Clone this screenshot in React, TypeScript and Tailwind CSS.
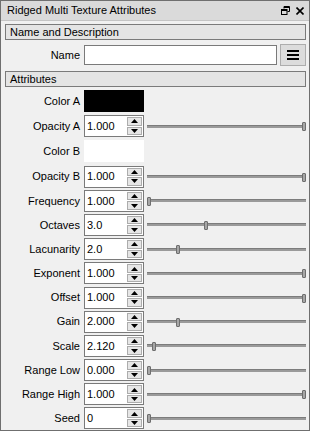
import React from 'react';

type Row =
  | { kind: 'color'; label: string; color: string }
  | { kind: 'spin'; label: string; value: string; pos: number };

const rows: Row[] = [
  { kind: 'color', label: 'Color A', color: '#000000' },
  { kind: 'spin', label: 'Opacity A', value: '1.000', pos: 1 },
  { kind: 'color', label: 'Color B', color: '#ffffff' },
  { kind: 'spin', label: 'Opacity B', value: '1.000', pos: 1 },
  { kind: 'spin', label: 'Frequency', value: '1.000', pos: 0 },
  { kind: 'spin', label: 'Octaves', value: '3.0', pos: 0.365 },
  { kind: 'spin', label: 'Lacunarity', value: '2.0', pos: 0.19 },
  { kind: 'spin', label: 'Exponent', value: '1.000', pos: 1 },
  { kind: 'spin', label: 'Offset', value: '1.000', pos: 1 },
  { kind: 'spin', label: 'Gain', value: '2.000', pos: 0.19 },
  { kind: 'spin', label: 'Scale', value: '2.120', pos: 0.03 },
  { kind: 'spin', label: 'Range Low', value: '0.000', pos: 0 },
  { kind: 'spin', label: 'Range High', value: '1.000', pos: 1 },
  { kind: 'spin', label: 'Seed', value: '0', pos: 0 },
];

function SectionHeader({ title }: { title: string }) {
  return (
    <div className="h-[16px] border border-[#7a7a7a] bg-[#e4e4e4] pl-[4px] flex items-center leading-none">
      {title}
    </div>
  );
}

function SpinBox({ value }: { value: string }) {
  return (
    <div className="w-[60px] h-[22px] border border-[#7a7a7a] bg-white flex items-center">
      <span className="flex-1 pl-[2px]">{value}</span>
      <div className="w-[15px] h-[20px] mr-[1px] flex flex-col gap-[1px] py-[1px]">
        <div className="flex-1 border border-[#acacac] bg-[#e6e6e6] flex items-center justify-center">
          <svg width="7" height="4" viewBox="0 0 7 4"><path d="M3.5 0 L7 4 L0 4 Z" fill="#000" /></svg>
        </div>
        <div className="flex-1 border border-[#acacac] bg-[#e6e6e6] flex items-center justify-center">
          <svg width="7" height="4" viewBox="0 0 7 4"><path d="M0 0 L7 0 L3.5 4 Z" fill="#000" /></svg>
        </div>
      </div>
    </div>
  );
}

function Slider({ pos }: { pos: number }) {
  return (
    <div className="flex-1 h-[22px] relative flex items-center">
      <div className="w-full h-[3px] bg-[#9a9a9a] border-t border-[#7c7c7c]" />
      <div
        className="absolute top-[7px] w-[4px] h-[9px] bg-[#a6a6a6] border border-[#6e6e6e] rounded-[1px]"
        style={{ left: `calc(${pos} * (100% - 4px))` }}
      />
    </div>
  );
}

export default function App() {
  return (
    <div
      className="w-[310px] h-[431px] bg-[#f0f0f0] border border-[#6f6f6f] flex flex-col text-[11px] text-black overflow-hidden"
      style={{ fontFamily: '"Liberation Sans", Arial, sans-serif' }}
    >
      {/* title bar */}
      <div className="h-[20px] bg-[#dadada] border-b border-[#c4c4c4] flex items-center pl-[6px] pr-[5px]">
        <span className="flex-1">Ridged Multi Texture Attributes</span>
        <svg width="9" height="9" viewBox="0 0 9 9" className="mr-[6px]">
          <path d="M3 0.5 H8.5 V5.5 H6.5 M3 0.5 V2.5" stroke="#000" fill="none" strokeWidth="1" />
          <path d="M3 1.5 H8" stroke="#000" strokeWidth="1" />
          <rect x="0.5" y="3.5" width="5.5" height="5" stroke="#000" fill="none" strokeWidth="1" />
          <path d="M0.5 4.5 H6" stroke="#000" strokeWidth="1" />
        </svg>
        <svg width="8" height="8" viewBox="0 0 8 8">
          <path d="M0.5 0.5 L7.5 7.5 M7.5 0.5 L0.5 7.5" stroke="#000" strokeWidth="1.6" />
        </svg>
      </div>

      <div className="flex flex-col pl-[4px] pr-[3px] pt-[3px]">
        <SectionHeader title="Name and Description" />

        <div className="flex items-center mt-[4px] h-[22px]">
          <span className="w-[79px] text-right pr-[4px]">Name</span>
          <div className="flex-1 h-[20px] border border-[#7a7a7a] bg-white" />
          <button className="ml-[3px] w-[26px] h-[22px] border border-[#adadad] bg-[#dcdcdc] flex flex-col items-center justify-center gap-[2px]">
            <span className="block w-[12px] h-[2px] bg-black" />
            <span className="block w-[12px] h-[2px] bg-black" />
            <span className="block w-[12px] h-[2px] bg-black" />
          </button>
        </div>

        <div className="mt-[5px]">
          <SectionHeader title="Attributes" />
        </div>

        <div className="flex flex-col gap-[2.2px] mt-[2px]">
          {rows.map((r) =>
            r.kind === 'color' ? (
              <div key={r.label} className="flex items-center h-[22px] my-[1px]">
                <span className="w-[79px] text-right pr-[4px]">{r.label}</span>
                <div
                  className={`w-[60px] h-[22px] ${r.color === '#000000' ? 'bg-black' : 'bg-white'}`}
                />
              </div>
            ) : (
              <div key={r.label} className="flex items-center h-[22px]">
                <span className="w-[79px] text-right pr-[4px]">{r.label}</span>
                <SpinBox value={r.value} />
                <div className="w-[3px]" />
                <Slider pos={r.pos} />
              </div>
            ),
          )}
        </div>
      </div>
    </div>
  );
}
